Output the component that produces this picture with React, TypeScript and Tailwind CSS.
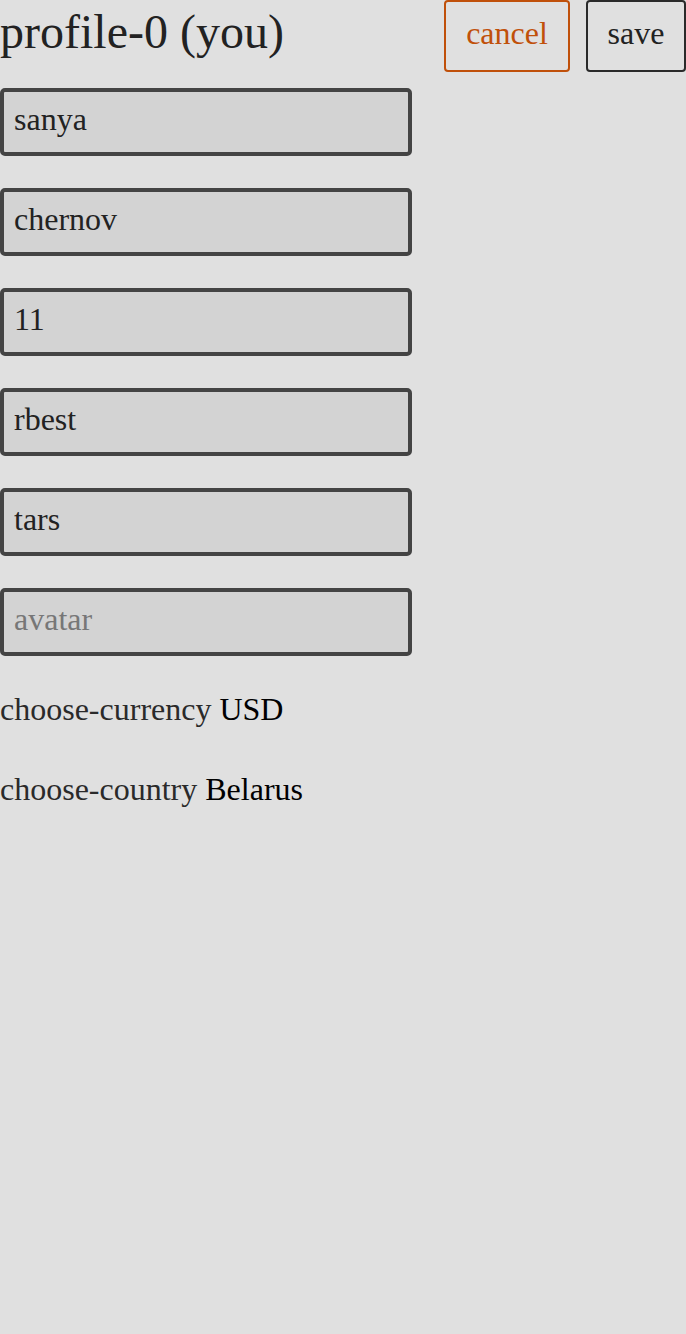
export default function App() {
  const fields = [
    { v: "sanya" },
    { v: "chernov" },
    { v: "11" },
    { v: "rbest" },
    { v: "tars" },
    { v: "", p: "avatar" },
  ];
  return (
    <div
      className="min-h-[1334px] w-[686px] bg-[#e0e0e0] text-[#222222]"
      style={{ fontFamily: '"Liberation Serif", serif' }}
    >
      <div className="flex h-[72px] items-start justify-between">
        <h1 className="text-[48px] leading-[64px] font-normal">profile-0 (you)</h1>
        <div className="flex gap-4">
          <button className="h-[72px] w-[126px] rounded-[4px] border-2 border-[#c0500a] pb-[6px] text-[32px] text-[#c0500a]">
            cancel
          </button>
          <button className="h-[72px] w-[100px] rounded-[4px] border-2 border-[#2a2a2a] pb-[6px] text-[32px] text-[#222222]">
            save
          </button>
        </div>
      </div>
      <div className="mt-[16px] flex flex-col gap-8">
        {fields.map((f, i) => (
          <input
            key={i}
            defaultValue={f.v}
            placeholder={f.p}
            className="box-border h-[68px] w-[412px] rounded-[5px] border-4 border-[#444444] bg-[#d3d3d3] px-[10px] pb-[6px] text-[32px] text-[#222222] placeholder:text-[#777777] outline-none"
            style={{ fontFamily: '"Liberation Serif", serif' }}
          />
        ))}
      </div>
      <div className="mt-[35px] flex flex-col gap-[44px] text-[32px] leading-[36px]">
        <div>
          <span className="text-[#2a2a2a]">choose-currency</span>{" "}
          <span className="text-[#000000]">USD</span>
        </div>
        <div>
          <span className="text-[#2a2a2a]">choose-country</span>{" "}
          <span className="text-[#000000]">Belarus</span>
        </div>
      </div>
    </div>
  );
}
